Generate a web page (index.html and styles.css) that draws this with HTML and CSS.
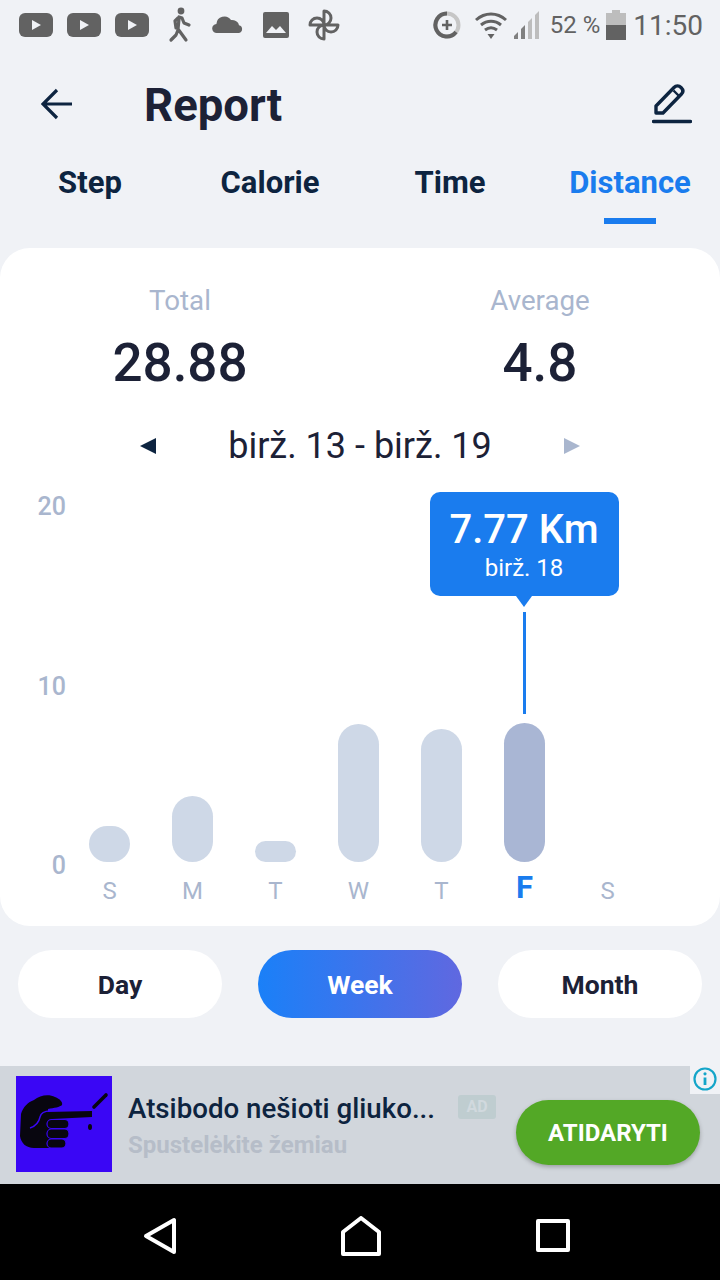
FILE: index.html
```html
<!DOCTYPE html>
<html lang="en">
<head>
  <meta charset="UTF-8">
  <title>Report</title>
  <link rel="stylesheet" href="styles.css">
</head>
<body>

  <div class="statusBar">
    <div class="statusIcons">
      <svg class="ytIcon" viewBox="0 0 34 24"><rect width="34" height="24" rx="6" fill="#626262"/><path d="M13 7l9 5-9 5z" fill="#f0f2f6"/></svg>
      <svg class="ytIcon" viewBox="0 0 34 24"><rect width="34" height="24" rx="6" fill="#626262"/><path d="M13 7l9 5-9 5z" fill="#f0f2f6"/></svg>
      <svg class="ytIcon" viewBox="0 0 34 24"><rect width="34" height="24" rx="6" fill="#626262"/><path d="M13 7l9 5-9 5z" fill="#f0f2f6"/></svg>
      <svg class="walkIcon" viewBox="0 0 24 36"><circle cx="13" cy="4" r="3.400" fill="#626262"/><path d="M10 11l-3 3 1 7M11 10l3 1 2 5 5 2M11 12l-1 10 8 11M10 23l-2 5-5 5" fill="none" stroke="#626262" stroke-width="3.200" stroke-linecap="round" stroke-linejoin="round"/></svg>
      <svg class="cloudIcon" viewBox="0 0 32 20"><path d="M5 19a4.500 4.500 0 0 1-.6-9A8 8 0 0 1 19 6a6 6 0 0 1 3 .3A6.600 6.600 0 0 1 27 11.200 4 4 0 0 1 27 19z" fill="#626262"/></svg>
      <svg class="photoIcon" viewBox="0 0 26 26"><rect width="26" height="26" rx="2" fill="#626262"/><path d="M3 21l6-7 4 4 4-4 6 7z" fill="#f0f2f6"/></svg>
      <svg class="pinIcon" viewBox="0 0 32 32" fill="none" stroke="#626262" stroke-width="3" stroke-linejoin="round"><path d="M16 16V2A7 7 0 0 1 16 16zM16 16H30A7 7 0 0 1 16 16zM16 16V30A7 7 0 0 1 16 16zM16 16H2A7 7 0 0 1 16 16z"/></svg>
    </div>
    <div class="statusRight">
      <svg class="dataIcon" viewBox="0 0 28 28" fill="none" stroke-width="4"><circle cx="14" cy="14" r="11.500" stroke="#c6c6c6"/><path d="M14 2.500A11.500 11.500 0 1 0 23 21" stroke="#626262"/><path d="M14 9v10M9 14h10" stroke="#626262" stroke-width="2.600"/></svg>
      <svg class="wifiIcon" viewBox="0 0 34 28" fill="none" stroke="#626262" stroke-width="3"><path d="M2 9c9-8 21-8 30 0M7 14c6-5 14-5 20 0M11 19c4-3 8-3 12 0"/><path d="M13.500 23h7L17 28z" fill="#626262" stroke="none"/></svg>
      <svg class="signalIcon" viewBox="0 0 28 28"><path d="M28 0v28H24V4z" fill="#bdbdbd"/><path d="M21 7v21h-4V11z" fill="#bdbdbd"/><path d="M14 14v14h-4V18z" fill="#808080"/><path d="M7 21v7H3v-3z" fill="#808080"/></svg>
      <span class="battText">52 %</span>
      <svg class="battIcon" viewBox="0 0 20 30"><path d="M6 0h8v3h6v12H0V3h6z" fill="#bdbdbd"/><rect y="15" width="20" height="15" fill="#626262"/></svg>
      <span class="clock">11:50</span>
    </div>
  </div>

  <div class="topBar">
    <svg class="backIcon" viewBox="0 0 32 32" fill="none" stroke="#0d2440" stroke-width="3.200"><path d="M31 16H3M16 2L2 16l14 14"/></svg>
    <h1 class="pageTitle">Report</h1>
    <svg class="editIcon" viewBox="0 0 40 40" fill="none" stroke="#0d2440" stroke-width="3.400"><path d="M4 29V22L22 3.500C24 1.500 27 1.500 29 3.500S31.500 8 29.500 10L11 29z" stroke-linejoin="round"/><path d="M21.500 6.500l5 5" stroke-width="2.400"/><path d="M1.500 37.500h37" stroke-linecap="round"/></svg>
  </div>

  <div class="tabs">
    <div class="tab">Step</div>
    <div class="tab">Calorie</div>
    <div class="tab">Time</div>
    <div class="tab active">Distance</div>
  </div>

  <div class="card">
    <div class="totals">
      <div class="totalBox">
        <div class="totalLabel">Total</div>
        <div class="totalValue">28.88</div>
      </div>
      <div class="totalBox">
        <div class="totalLabel">Average</div>
        <div class="totalValue">4.8</div>
      </div>
    </div>

    <div class="dateRow">
      <span class="arrowLeft"></span>
      <span class="dateText">birž. 13 - birž. 19</span>
      <span class="arrowRight"></span>
    </div>

    <div class="chart">
      <div class="axis">
        <span>20</span>
        <span>10</span>
        <span>0</span>
      </div>
      <div class="plot">
        <div class="barCol"><div class="bar" style="height: 36px"></div><span class="dayName">S</span></div>
        <div class="barCol"><div class="bar" style="height: 66px"></div><span class="dayName">M</span></div>
        <div class="barCol"><div class="bar" style="height: 21px"></div><span class="dayName">T</span></div>
        <div class="barCol"><div class="bar" style="height: 138px"></div><span class="dayName">W</span></div>
        <div class="barCol"><div class="bar" style="height: 133px"></div><span class="dayName">T</span></div>
        <div class="barCol current">
          <div class="tooltip">
            <div class="tipValue">7.77 Km</div>
            <div class="tipDate">birž. 18</div>
          </div>
          <div class="tipLine"></div>
          <div class="bar" style="height: 139px"></div>
          <span class="dayName">F</span>
        </div>
        <div class="barCol"><span class="dayName">S</span></div>
      </div>
    </div>
  </div>

  <div class="ranges">
    <button class="rangeBtn">Day</button>
    <button class="rangeBtn active">Week</button>
    <button class="rangeBtn">Month</button>
  </div>

  <div class="adBanner">
    <svg class="adImage" viewBox="0 0 96 96">
      <rect width="96" height="96" fill="#3a06f5"/>
      <path d="M5 38C7 31 12 26 18 24C24 19 33 18 39 21C44 23 47 26 46 29C44 31 38 32 32 33V36L76 35V41L36 43V72H18C10 72 5 67 4 60z" fill="#08060f"/>
      <g fill="#08060f" stroke="#3a06f5" stroke-width="1.200">
        <rect x="31" y="43.500" width="22" height="9" rx="4.500"/>
        <rect x="31" y="53" width="22" height="9.500" rx="4.500"/>
        <rect x="31" y="63" width="19" height="9" rx="4.500"/>
      </g>
      <path d="M78 31L90 19" stroke="#08060f" stroke-width="3.600" stroke-linecap="round"/>
      <ellipse cx="74" cy="51" rx="2" ry="3" fill="#08060f"/>
      <path d="M14 52C20 50 23 46 24 41C25 37 28 35 34 35" fill="none" stroke="#3a06f5" stroke-width="1.400"/>
    </svg>
    <div class="adText">
      <div class="adTitle">Atsibodo nešioti gliuko...</div>
      <div class="adSub">Spustelėkite žemiau</div>
    </div>
    <span class="adBadge">AD</span>
    <button class="adBtn">ATIDARYTI</button>
    <div class="adInfo">
      <svg viewBox="0 0 24 24" fill="none" stroke="#14a5c9" stroke-width="2.200"><circle cx="12" cy="12" r="10.500"/><path d="M12 10.500V18" stroke-width="2.800"/><circle cx="12" cy="6.800" r="1.600" fill="#14a5c9" stroke="none"/></svg>
    </div>
  </div>

  <div class="navBar">
    <svg class="navBack" viewBox="0 0 34 38" fill="none" stroke="#fff" stroke-width="4" stroke-linejoin="round"><path d="M31 3v32L3 19z"/></svg>
    <svg class="navHome" viewBox="0 0 40 40" fill="none" stroke="#fff" stroke-width="4" stroke-linejoin="round"><path d="M2 38V16L20 2l18 14v22z"/></svg>
    <svg class="navSquare" viewBox="0 0 34 33" fill="none" stroke="#fff" stroke-width="4" stroke-linejoin="round"><rect x="2" y="2" width="30" height="29"/></svg>
  </div>

</body>
</html>
```

FILE: styles.css
```css
* { box-sizing: border-box; }
body {
  margin: 0;
  width: 720px;
  height: 1280px;
  overflow: hidden;
  display: flex;
  flex-direction: column;
  font-family: Roboto, sans-serif;
  background: #f0f2f6;
  color: #1c2136;
}

/* status bar */
.statusBar {
  height: 50px;
  padding: 0 17px 0 19px;
  display: flex;
  justify-content: space-between;
  align-items: center;
}
.statusIcons, .statusRight {
  display: flex;
  align-items: center;
}
.ytIcon { width: 34px; height: 24px; margin-right: 14px; }
.walkIcon { width: 24px; height: 36px; margin-left: 5px; margin-right: 20px; }
.cloudIcon { width: 32px; height: 20px; margin-right: 19px; margin-bottom: 3px; }
.photoIcon { width: 26px; height: 26px; margin-right: 19px; }
.pinIcon { width: 32px; height: 32px; }
.dataIcon { width: 28px; height: 28px; margin-right: 13px; }
.wifiIcon { width: 34px; height: 28px; margin-right: 3px; }
.signalIcon { width: 28px; height: 28px; margin-right: 11px; }
.battText { font-size: 24px; color: #626262; margin-right: 6px; }
.battIcon { width: 20px; height: 30px; margin-right: 7px; }
.clock { font-size: 28px; color: #626262; }

/* header */
.topBar {
  height: 108px;
  padding: 0 28px 0 41px;
  display: flex;
  align-items: center;
}
.backIcon { width: 32px; height: 32px; }
.pageTitle {
  flex: 1;
  margin: 0 0 0 71px;
  padding-top: 2px;
  font-size: 45.500px;
  font-weight: 700;
}
.editIcon { width: 40px; height: 40px; }

.tabs {
  height: 66px;
  display: grid;
  grid-template-columns: repeat(4, 1fr);
}
.tab {
  position: relative;
  text-align: center;
  font-size: 31px;
  font-weight: 700;
  line-height: 50px;
  color: #0d2440;
}
.tab.active { color: #1a7cee; }
.tab.active::after {
  content: "";
  position: absolute;
  left: 64px;
  bottom: 0;
  width: 52px;
  height: 6px;
  background: #1a7cee;
}

/* white report card */
.card {
  margin-top: 24px;
  height: 678px;
  background: #fff;
  border-radius: 30px;
  padding-top: 37px;
}
.totals {
  display: grid;
  grid-template-columns: 1fr 1fr;
  text-align: center;
}
.totalLabel {
  font-size: 27.700px;
  line-height: 32px;
  color: #a9b6ce;
}
.totalValue {
  margin-top: 15px;
  font-size: 53px;
  line-height: 62px;
  font-weight: 500;
}
.dateRow {
  margin-top: 30px;
  height: 44px;
  padding: 0 140px;
  display: flex;
  justify-content: space-between;
  align-items: center;
}
.dateText { font-size: 36px; }
.arrowLeft, .arrowRight {
  width: 0;
  height: 0;
  border-top: 8px solid transparent;
  border-bottom: 8px solid transparent;
}
.arrowLeft { border-right: 16px solid #0d2440; }
.arrowRight { border-left: 16px solid #a9b6ce; }

/* chart */
.chart {
  margin-top: 24px;
  height: 412px;
  display: flex;
}
.axis {
  width: 68px;
  height: 388px;
  padding: 1px 2px 0 0;
  display: flex;
  flex-direction: column;
  justify-content: space-between;
  align-items: flex-end;
  font-size: 25px;
  font-weight: 500;
  line-height: 28px;
  color: #a9b6ce;
}
.plot {
  flex: 1;
  padding-bottom: 3px;
  display: flex;
}
.barCol {
  position: relative;
  width: 83px;
  display: flex;
  flex-direction: column;
  justify-content: flex-end;
  align-items: center;
}
.bar {
  width: 41px;
  border-radius: 21px;
  background: #ced8e7;
}
.dayName {
  height: 39px;
  line-height: 58px;
  font-size: 24px;
  color: #a9b6ce;
}
.current .bar { background: #a9b6d4; }
.current .dayName {
  font-size: 31px;
  font-weight: 700;
  line-height: 52px;
  color: #1a7cee;
}
.tooltip {
  position: absolute;
  left: 50%;
  top: 0;
  width: 189px;
  height: 104px;
  margin-left: -95px;
  padding-top: 15px;
  border-radius: 10px;
  background: #1a7cee;
  color: #fff;
  text-align: center;
}
.tooltip::after {
  content: "";
  position: absolute;
  left: 50%;
  top: 104px;
  margin-left: -8px;
  border-top: 11px solid #1a7cee;
  border-left: 8px solid transparent;
  border-right: 8px solid transparent;
}
.tipValue { font-size: 40px; line-height: 46px; font-weight: 500; }
.tipDate { font-size: 24px; line-height: 30px; }
.tipLine {
  position: absolute;
  left: 50%;
  top: 120px;
  width: 3px;
  height: 102px;
  margin-left: -2px;
  background: #1a7cee;
}

/* day / week / month */
.ranges {
  margin-top: 24px;
  padding: 0 18px;
  display: flex;
  justify-content: space-between;
}
.rangeBtn {
  width: 204px;
  height: 68px;
  border: none;
  border-radius: 34px;
  background: #fff;
  font-family: Roboto, sans-serif;
  font-size: 26.500px;
  font-weight: 700;
  padding-top: 1px;
  color: #1c2136;
}
.rangeBtn.active {
  background: linear-gradient(to right, #1a80f8, #6068e0);
  color: #fff;
}

/* ad banner */
.adBanner {
  position: relative;
  margin-top: 48px;
  height: 118px;
  padding: 10px 20px 0 16px;
  display: flex;
  align-items: flex-start;
  background: #d1d6dc;
}
.adImage { width: 96px; height: 96px; flex-shrink: 0; }
.adText { width: 330px; margin-left: 16px; }
.adTitle {
  margin-top: 15px;
  font-size: 27.700px;
  line-height: 36px;
  font-weight: 500;
  white-space: nowrap;
  color: #0d2440;
}
.adSub {
  font-size: 24px;
  line-height: 36px;
  font-weight: 700;
  color: #b6bdc8;
}
.adBadge {
  width: 38px;
  height: 24px;
  margin-top: 19px;
  border-radius: 3px;
  background: #bfcdd0;
  color: #d1d9de;
  font-size: 16px;
  font-weight: 700;
  line-height: 24px;
  text-align: center;
}
.adBtn {
  width: 184px;
  height: 65px;
  margin-top: 24px;
  margin-left: 20px;
  border: none;
  border-radius: 33px;
  background: #53a826;
  box-shadow: 0 2px 4px rgba(0, 0, 0, 0.25);
  font-family: Roboto, sans-serif;
  font-size: 24px;
  font-weight: 700;
  color: #fff;
}
.adInfo {
  position: absolute;
  right: 0;
  top: -2px;
  width: 30px;
  height: 30px;
  padding: 3px;
  background: #f0f2f6;
}
.adInfo svg { display: block; width: 24px; height: 24px; }

/* android nav */
.navBar {
  height: 96px;
  padding-bottom: 24px;
  background: #000;
  display: flex;
  align-items: flex-end;
}
.navBack { width: 34px; height: 38px; margin-left: 143px; margin-bottom: 1px; }
.navHome { width: 40px; height: 40px; margin-left: 164px; }
.navSquare { width: 34px; height: 33px; margin-left: 155px; margin-bottom: 4px; }
```
